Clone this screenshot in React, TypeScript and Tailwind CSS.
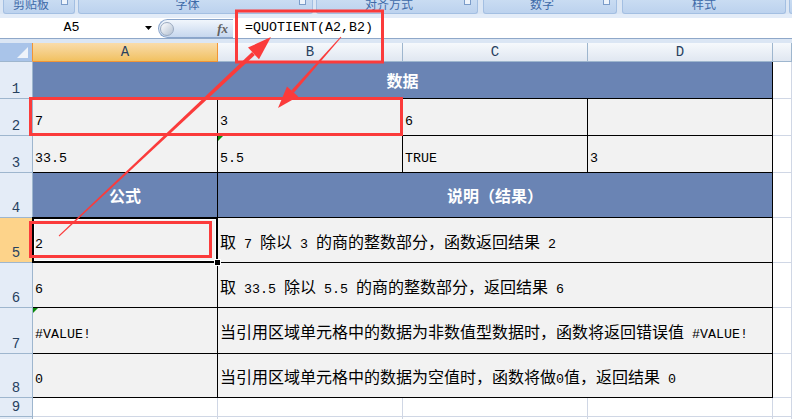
import React from "react"

const mono = "font-['Liberation_Mono','Noto_Sans_CJK_SC',sans-serif]"
const cjk = "font-['Noto_Sans_CJK_SC',sans-serif]"

const black = "border-r border-b border-black"
const light = "border-r border-b border-[#d0d7e5]"
const dataCell = `${black} bg-[#f2f2f2] flex items-center pl-[2px] pt-[4px] whitespace-pre text-[16px] leading-none ${cjk}`
const headCell = `${black} bg-[#6a84b4] flex items-center justify-center text-white font-bold text-[16px] ${cjk}`
const rowHead = `flex items-end justify-center pb-[2px] border-r border-b border-[#9eb6ce] bg-[#e4ecf7] text-[#27415f] text-[14px] leading-none ${mono}`
const colHead = `flex items-center justify-center border-r border-b border-[#9eb6ce] bg-linear-to-b from-[#f6f9fc] to-[#e0e7f1] text-[#27415f] text-[14px] ${mono}`
const empty = `${light} bg-white`

// latin runs are half-width, like SimSun
function Mixed({ text }: { text: string }) {
  const parts = text.split(/([\x00-\x7f]+)/).filter(Boolean)
  return (
    <span>
      {parts.map((p, i) =>
        /^[\x00-\x7f]+$/.test(p) ? (
          <span key={i} className={`text-[13.33px] ${mono}`}>
            {p}
          </span>
        ) : (
          <span key={i}>{p}</span>
        )
      )}
    </span>
  )
}

function Group({ cls, label, launcher }: { cls: string; label: string; launcher?: boolean }) {
  return (
    <div
      className={`${cls} shrink-0 flex rounded-b-[3px] border border-t-0 border-[#a3bfe2] bg-linear-to-b from-[#c9dcf2] to-[#bcd2ee]`}
    >
      <div className={`flex-1 flex items-end justify-center pb-[3px] text-[12px] leading-none text-[#3e6aa8] ${cjk}`}>
        {label}
      </div>
      {launcher && <div className="w-[7px] h-[5px] ml-[3px] mr-[6px] border border-t-0 border-[#7b9cc9] bg-[#eef4fb]" />}
    </div>
  )
}

function GreenMark() {
  return (
    <div className="absolute left-0 top-0 w-0 h-0 border-t-[5px] border-t-[#0a8a0a] border-r-[5px] border-r-transparent" />
  )
}

function arrow(x1: number, y1: number, x2: number, y2: number, w1: number, w2: number, hl: number, hw: number) {
  const dx = x2 - x1
  const dy = y2 - y1
  const L = Math.hypot(dx, dy)
  const ux = dx / L
  const uy = dy / L
  const nx = -uy
  const ny = ux
  const bx = x2 - ux * hl
  const by = y2 - uy * hl
  const pts = (a: number[][]) => a.map((p) => p.map((v) => v.toFixed(1)).join(",")).join(" ")
  return {
    shaft: pts([
      [x1 + (nx * w1) / 2, y1 + (ny * w1) / 2],
      [bx + (nx * w2) / 2, by + (ny * w2) / 2],
      [bx - (nx * w2) / 2, by - (ny * w2) / 2],
      [x1 - (nx * w1) / 2, y1 - (ny * w1) / 2],
    ]),
    head: pts([
      [x2, y2],
      [bx + nx * hw, by + ny * hw],
      [bx - nx * hw, by - ny * hw],
    ]),
  }
}

export default function App() {
  const a1 = arrow(59, 236, 271, 37, 1, 4, 24, 8)
  const a2 = arrow(341, 37, 278, 108, 1, 3.5, 22, 7.5)
  const red = "#fb3b3b"

  return (
    <div className="relative w-[792px] h-[419px] overflow-hidden bg-white">
      {/* Ribbon group labels */}
      <div className="flex h-[14px] overflow-hidden bg-[#dbe6f4]">
        <div className="w-[3px] shrink-0" />
        <Group cls="w-[72px]" label="剪贴板" launcher />
        <div className="w-[3px] shrink-0" />
        <Group cls="w-[235px]" label="字体" launcher />
        <div className="w-[3px] shrink-0" />
        <Group cls="w-[162px]" label="对齐方式" launcher />
        <div className="w-[5px] shrink-0" />
        <Group cls="w-[134px]" label="数字" launcher />
        <div className="w-[5px] shrink-0" />
        <Group cls="w-[164px]" label="样式" />
        <div className="w-[3px] shrink-0" />
        <Group cls="w-[40px]" label="" />
      </div>
      <div className="h-[4px] bg-[#e3ecf8]" />

      {/* Formula bar */}
      <div className="flex h-[20px] bg-white">
        <div className={`w-[143px] flex items-center justify-center text-[13.33px] ${mono}`}>A5</div>
        <div className="w-[15px] flex items-center pl-[2px]">
          <svg width="7" height="4" viewBox="0 0 7 4">
            <path d="M0 0H7L3.5 4Z" fill="#000" />
          </svg>
        </div>
        <div className="w-[75px] h-[19px] mt-[1px] rounded-l-full border border-r-0 border-[#8aa5cb] bg-linear-to-b from-[#f1f6fc] to-[#c6d7ee] flex items-center justify-between pl-[1px] pr-[5px]">
          <div className="w-[14px] h-[14px] rounded-full border border-[#9aaac0] bg-linear-to-br from-white to-[#b4c1d3]" />
          <span className="font-['Liberation_Serif',serif] italic font-bold text-[13px] text-[#606060]">fx</span>
        </div>
        <div className={`flex-1 flex items-center pl-[12px] text-[13.33px] ${mono}`}>=QUOTIENT(A2,B2)</div>
      </div>
      <div className="h-px bg-[#8fa8c9]" />
      <div className="h-[4px] bg-[#dbe6f4]" />

      {/* Sheet */}
      <div className="grid grid-cols-[33px_185px_185px_185px_185px_19px] grid-rows-[19px_37px_37px_37px_45px_45px_45px_46px_44px_19px_20px]">
        {/* column headers */}
        <div className="relative border-r border-b border-r-[#f29536] border-b-[#9eb6ce] bg-[#a9c4e9]">
          <svg className="absolute right-[4px] bottom-[3px]" width="11" height="11" viewBox="0 0 11 11">
            <path d="M11 0V11H0Z" fill="#eef3fa" />
          </svg>
        </div>
        <div className={`flex items-center justify-center border-r border-b border-[#f29536] bg-linear-to-b from-[#f9dcaa] to-[#f1c15f] text-[#27415f] text-[14px] ${mono}`}>
          A
        </div>
        <div className={colHead}>B</div>
        <div className={colHead}>C</div>
        <div className={colHead}>D</div>
        <div className={colHead}></div>

        {/* row 1 */}
        <div className={rowHead}>1</div>
        <div className={`${headCell} col-span-4`}>数据</div>
        <div className={empty} />

        {/* row 2 */}
        <div className={rowHead}>2</div>
        <div className={dataCell}><Mixed text="7" /></div>
        <div className={dataCell}><Mixed text="3" /></div>
        <div className={dataCell}><Mixed text="6" /></div>
        <div className={dataCell}></div>
        <div className={empty} />

        {/* row 3 */}
        <div className={rowHead}>3</div>
        <div className={dataCell}><Mixed text="33.5" /></div>
        <div className={`${dataCell} relative`}>
          <GreenMark />
          <Mixed text="5.5" />
        </div>
        <div className={dataCell}><Mixed text="TRUE" /></div>
        <div className={dataCell}><Mixed text="3" /></div>
        <div className={empty} />

        {/* row 4 */}
        <div className={rowHead}>4</div>
        <div className={headCell}>公式</div>
        <div className={`${headCell} col-span-3`}>说明（结果）</div>
        <div className={empty} />

        {/* row 5 */}
        <div className={`flex items-end justify-center pb-[2px] border-r border-b border-r-[#f29536] border-b-[#9eb6ce] bg-[#fdd38a] text-[#27415f] text-[14px] leading-none ${mono}`}>
          5
        </div>
        <div className={`${dataCell} relative`}>
          <Mixed text="2" />
          <div className="absolute -left-[1px] -top-[1px] -right-[1px] -bottom-[1px] z-10 border-2 border-black shadow-[inset_0_0_0_1px_white]" />
          <div className="absolute -right-[4px] -bottom-[4px] z-10 w-[7px] h-[7px] bg-black border border-white" />
        </div>
        <div className={`${dataCell} col-span-3`}><Mixed text="取 7 除以 3 的商的整数部分，函数返回结果 2" /></div>
        <div className={empty} />

        {/* row 6 */}
        <div className={rowHead}>6</div>
        <div className={dataCell}><Mixed text="6" /></div>
        <div className={`${dataCell} col-span-3`}><Mixed text="取 33.5 除以 5.5 的商的整数部分，返回结果 6" /></div>
        <div className={empty} />

        {/* row 7 */}
        <div className={rowHead}>7</div>
        <div className={`${dataCell} relative`}>
          <GreenMark />
          <Mixed text="#VALUE!" />
        </div>
        <div className={`${dataCell} col-span-3`}>
          <Mixed text="当引用区域单元格中的数据为非数值型数据时，函数将返回错误值 #VALUE!" />
        </div>
        <div className={empty} />

        {/* row 8 */}
        <div className={rowHead}>8</div>
        <div className={dataCell}><Mixed text="0" /></div>
        <div className={`${dataCell} col-span-3`}>
          <Mixed text="当引用区域单元格中的数据为空值时，函数将做0值，返回结果 0" />
        </div>
        <div className={empty} />

        {/* rows 9-10 */}
        <div className={rowHead}>9</div>
        <div className={empty} />
        <div className={empty} />
        <div className={empty} />
        <div className={empty} />
        <div className={empty} />
        <div className={rowHead}>10</div>
        <div className={empty} />
        <div className={empty} />
        <div className={empty} />
        <div className={empty} />
        <div className={empty} />
      </div>

      {/* red annotations */}
      <svg className="absolute inset-0 z-20 pointer-events-none" width="792" height="419" viewBox="0 0 792 419">
        <rect x="236.5" y="11" width="146" height="51" fill="none" stroke={red} strokeWidth="3" />
        <rect x="30.5" y="98.5" width="371" height="36" fill="none" stroke={red} strokeWidth="3" />
        <rect x="30.5" y="222.5" width="180" height="34" fill="none" stroke={red} strokeWidth="3" />
        <polygon points={a1.shaft} fill={red} />
        <polygon points={a1.head} fill={red} />
        <polygon points={a2.shaft} fill={red} />
        <polygon points={a2.head} fill={red} />
      </svg>
    </div>
  )
}
